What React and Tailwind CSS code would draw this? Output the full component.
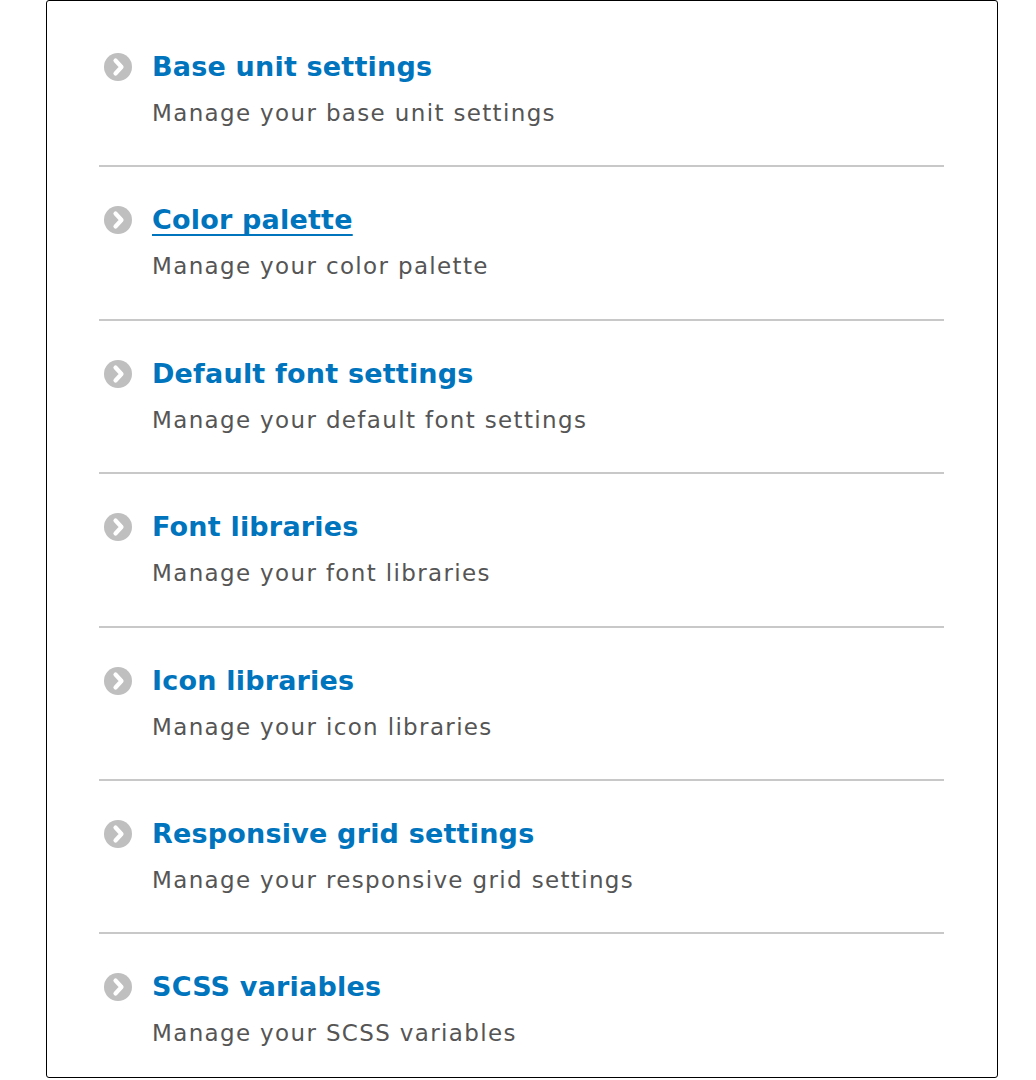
import React from "react";

const items = [
  { title: "Base unit settings", desc: "Manage your base unit settings" },
  { title: "Color palette", desc: "Manage your color palette", underline: true },
  { title: "Default font settings", desc: "Manage your default font settings" },
  { title: "Font libraries", desc: "Manage your font libraries" },
  { title: "Icon libraries", desc: "Manage your icon libraries" },
  { title: "Responsive grid settings", desc: "Manage your responsive grid settings" },
  { title: "SCSS variables", desc: "Manage your SCSS variables" },
];

function Chevron() {
  return (
    <svg width="28" height="28" viewBox="0 0 28 28" className="shrink-0">
      <circle cx="14" cy="14" r="14" fill="#bfbfbf" />
      <polyline
        points="11.5,7.5 17.5,14 11.5,20.5"
        fill="none"
        stroke="#ffffff"
        strokeWidth="4.2"
        strokeLinecap="round"
        strokeLinejoin="round"
      />
    </svg>
  );
}

export default function App() {
  return (
    <div className="bg-white w-[1036px] h-[1080px] overflow-hidden" style={{ fontFamily: '"DejaVu Sans", Verdana, sans-serif' }}>
      <div className="ml-[46px] w-[952px] h-[1078px] border-[1.5px] border-black rounded-[3px] pt-[13px] pl-[52px] pr-[53px] overflow-hidden">
        <ul>
          {items.map((it, i) => (
            <li
              key={i}
              className={
                "pt-[36px] pb-[36.4px] " +
                (i < items.length - 1 ? "border-b-2 border-[#c8c8c8]" : "")
              }
            >
              <div className="flex items-center h-[34px]">
                <div className="w-[53px] pl-[5px] flex items-center">
                  <Chevron />
                </div>
                <a
                  href="#"
                  className={
                    "text-[27px] font-bold leading-[34px] tracking-[0.2px] text-[#0074bd] " +
                    (it.underline ? "underline decoration-2 underline-offset-[5px]" : "no-underline")
                  }
                >
                  {it.title}
                </a>
              </div>
              <div className="mt-[14px] pl-[53px] text-[23px] leading-[31px] tracking-[1.35px] text-[#555555]">
                {it.desc}
              </div>
            </li>
          ))}
        </ul>
      </div>
    </div>
  );
}
